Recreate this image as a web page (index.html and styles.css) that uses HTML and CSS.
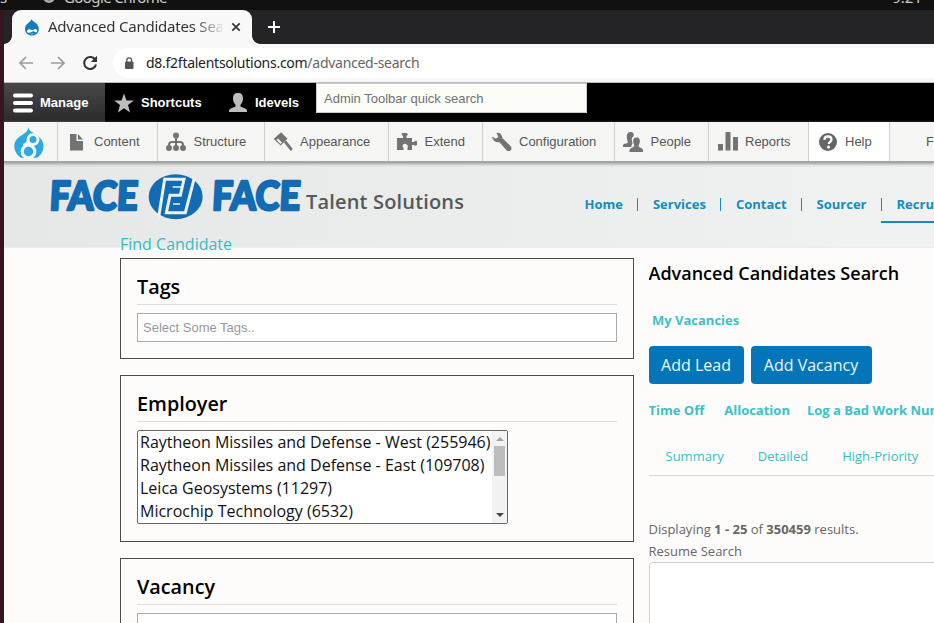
FILE: index.html
```html
<!DOCTYPE html>
<html lang="en">
<head>
<meta charset="utf-8">
<title>Advanced Candidates Search</title>
<link rel="stylesheet" href="styles.css">
</head>
<body>
<div class="os-bar">
  <span class="os-left">s</span>
  <svg class="os-icon" width="14" height="14" viewBox="0 0 14 14"><circle cx="7" cy="7" r="6" fill="#aaa"/><circle cx="7" cy="7" r="3" fill="#eee" stroke="#333"/></svg>
  <span class="os-app">Google Chrome</span>
  <span class="os-clock">9:21</span>
</div>
<div class="window">
  <div class="tabs">
    <div class="tab">
      <svg width="16" height="18" viewBox="0 0 16 18"><path d="M7.500 1C8 3.500 14.800 5 14.800 11c0 4-3 6.500-6.800 6.500S1 15 1 11C1 5.500 7 4.500 7.500 1z" fill="#1679b8"/><path d="M3 13.500c0-2 2-2.700 3.600-2 1.600.8 2.400.6 3.600-.1 1.500-.9 3 .1 3 1.600 0 1.600-1.500 1.700-2.700.8-1.200-.8-1.800-.6-3 .2-2 1.200-4.500.8-4.500-.5zM6 15.800q2 1 4 0" fill="#fff"/></svg>
      <span class="tab-title">Advanced Candidates Sea</span>
      <svg class="tab-close" width="10" height="10" viewBox="0 0 10 10"><path d="M1.300 1.300l7.400 7.400M8.700 1.300L1.300 8.700" stroke="#333" stroke-width="1.700"/></svg>
    </div>
    <svg class="tab-new" width="12" height="12" viewBox="0 0 12 12"><path d="M6 0v12M0 6h12" stroke="#fff" stroke-width="2"/></svg>
  </div>
  <div class="address">
    <svg class="nav" width="14" height="14" viewBox="0 0 14 14"><path d="M14 7H1M7 1L1 7l6 6" fill="none" stroke="#9c9c9c" stroke-width="1.700"/></svg>
    <svg class="nav" width="14" height="14" viewBox="0 0 14 14"><path d="M0 7h13M7 1l6 6-6 6" fill="none" stroke="#9c9c9c" stroke-width="1.700"/></svg>
    <svg class="nav reload" width="16" height="16" viewBox="0 0 16 16"><path d="M13.400 5A6 6 0 1 0 14 9.500" fill="none" stroke="#333" stroke-width="2"/><path d="M15 .8V7H8.800z" fill="#333"/></svg>
    <div class="url-field">
      <svg width="10" height="13" viewBox="0 0 10 13"><rect x="1" y="4.500" width="8.500" height="7.500" rx="1" fill="#555"/><path d="M2.800 5V3.300a2.400 2.400 0 0 1 4.800 0V5" fill="none" stroke="#555" stroke-width="1.300"/></svg>
      <span class="url">d8.f2ftalentsolutions.com<span>/advanced-search</span></span>
    </div>
  </div>
  <div class="admin">
    <div class="admin-item manage"><svg width="20" height="20" viewBox="0 0 20 20"><path d="M2 2.500h16M2 10h16M2 17.500h16" stroke="#fff" stroke-width="4" stroke-linecap="round"/></svg><b>Manage</b></div>
    <div class="admin-item shortcuts"><svg width="20" height="20" viewBox="0 0 20 20"><path d="M10 .5l2.500 6.900 7.300.2-5.800 4.500 2.100 7.300L10 15.200l-6.100 4.200L6 12.100.2 7.600l7.300-.2z" fill="#bdbdbd"/></svg><b>Shortcuts</b></div>
    <div class="admin-item user"><svg width="20" height="20" viewBox="0 0 20 20"><path d="M10 0c3.500 0 5 2 5 5.500 0 3-1.300 4.800-2.300 6-.7 1-.3 2.200.8 2.600 2.800 1 5 1.500 5.500 3.500V19H1v-1.400c.5-2 2.700-2.500 5.500-3.500 1.100-.4 1.500-1.600.8-2.600-1-1.200-2.300-3-2.300-6C5 2 6.500 0 10 0z" fill="#bdbdbd"/></svg><b>Idevels</b></div>
    <div class="quick">Admin Toolbar quick search</div>
  </div>
  <div class="tray">
    <div class="tray-item t-home"><svg width="30" height="32" viewBox="0 0 30 32"><path d="M14.500 0c.3 3.500 3.200 4.700 6.500 6.800C25 9.500 29.500 13.200 29.500 19c0 5-2.500 9-6.500 11.700H7C3 28 .3 24 .3 19c0-5.500 4-8.500 8.200-11.200C12.500 5.200 14.200 3.500 14.500 0z" fill="#2ba9e0"/><circle cx="19" cy="12.500" r="5" fill="#2ba9e0" stroke="#f5f5f2" stroke-width="3"/><circle cx="14.500" cy="24.500" r="6.300" fill="#2ba9e0" stroke="#f5f5f2" stroke-width="3.200"/><path d="M14 14.500q-1 2.500-4.500 4" fill="none" stroke="#f5f5f2" stroke-width="3"/></svg></div>
    <div class="tray-item t-content"><svg width="20" height="20" viewBox="0 0 20 20"><path d="M3 2h6.500v7H16v9.500H3zM11 2l5 5.500h-5z" fill="#737373"/></svg>Content</div>
    <div class="tray-item t-structure"><svg width="20" height="20" viewBox="0 0 20 20"><path d="M10 4v13M3 16v-3q0-3 3-3h8q3 0 3 3v3" fill="none" stroke="#737373" stroke-width="2"/><g fill="#737373"><circle cx="10" cy="3.500" r="3"/><circle cx="3" cy="16" r="3"/><circle cx="10" cy="16" r="3"/><circle cx="17" cy="16" r="3"/></g></svg>Structure</div>
    <div class="tray-item t-appearance"><svg width="20" height="20" viewBox="0 0 20 20"><path d="M8 .3l6.500 6.500-6.800 6.800L.7 7z" fill="#737373"/><path d="M5 6.500l4 4-1.500 1.500L3.500 8z" fill="#f5f5f2"/><path d="M11 10.500l2-2 6.500 8q.2 2.300-2 2.300z" fill="#737373"/></svg>Appearance</div>
    <div class="tray-item t-extend"><svg width="20" height="20" viewBox="0 0 20 20"><path d="M0 6h6V4q-2-1-1-3h5q1.500 2-.5 3v2H15v4h2q1-2 3-1v4q-2 1.500-3 0h-2v5h-4.500v-2q1-3-1.500-4-3-.7-3.500 2 0 1 1 2v2H0z" fill="#737373"/></svg>Extend</div>
    <div class="tray-item t-config"><svg width="20" height="20" viewBox="0 0 20 20"><path d="M4.500.8Q9.500.3 10.300 6l8.500 8.200q1.500 2.300-.3 4.200-2 1.500-4-.2L7.500 10.300Q1.500 11 0 4.500l4 2.300 2.300-2z" fill="#737373"/></svg>Configuration</div>
    <div class="tray-item t-people"><svg width="20" height="20" viewBox="0 0 20 20"><g fill="#737373"><path d="M7.500 0C10 0 11 1.500 10.800 4 8.500 5 8.300 8.500 9.600 11L8 15H0v-2c1-1.500 5-1.500 5-3C3.500 7 2.500 0 7.500 0z"/><path d="M13.500 5.500c3 0 4 2.500 3 5.800-.8 2.300-1.500 3.200 0 3.900 1.800.7 3.500 1.300 3.500 3V20H6.500v-1.800c0-1.700 1.800-2.300 3.500-3 1.500-.7 1.300-1.600.5-3.900-1-3.300 0-5.800 3-5.800z"/></g></svg>People</div>
    <div class="tray-item t-reports"><svg width="20" height="20" viewBox="0 0 20 20"><path d="M0 12h5v6.500H0zM7.500 0h5v18.500h-5zM15 5h5v13.500h-5z" fill="#737373"/></svg>Reports</div>
    <div class="tray-item t-help"><svg width="20" height="20" viewBox="0 0 20 20"><circle cx="10" cy="10" r="9" fill="#666"/><path d="M6.500 7.800C6.500 5.500 8 4.500 10 4.500s3.500 1 3.500 3c0 2.400-2.700 2.500-2.700 4.500" fill="none" stroke="#fff" stroke-width="2.300"/><circle cx="10.500" cy="15" r="1.500" fill="#fff"/></svg>Help</div>
    <div class="tray-item t-last">Fl</div>
  </div>
  <header class="site-header">
    <svg class="logo" width="420" height="50" viewBox="0 0 420 50">
      <g class="logo-face" transform="skewX(-3)"><text x="1" y="36" textLength="88" lengthAdjust="spacingAndGlyphs">FACE</text><text x="163.500" y="36" textLength="88" lengthAdjust="spacingAndGlyphs">FACE</text></g>
      <g transform="translate(-50 -14) scale(.33333)">
        <ellipse cx="527" cy="110" rx="81" ry="67.500" fill="#126bb3"/>
        <path d="M475 178L494 58H552L541 106H510L499 158H556L584 50" fill="none" stroke="#edf1f1" stroke-width="9"/>
        <path d="M518 81H544M519 132H540" fill="none" stroke="#edf1f1" stroke-width="5"/>
      </g>
      <text class="logo-name" x="256" y="34.500" textLength="158">Talent Solutions</text>
    </svg>
    <nav class="menu"><a>Home</a><a>Services</a><a>Contact</a><a>Sourcer</a><a class="current">Recruiter</a></nav>
  </header>
  <main class="page">
    <section class="filters">
      <div class="find">Find Candidate</div>
      <div class="box"><h2>Tags</h2><div class="field">Select Some Tags..</div></div>
      <div class="box"><h2>Employer</h2>
        <div class="listbox">
          <ul><li>Raytheon Missiles and Defense - West (255946)</li><li>Raytheon Missiles and Defense - East (109708)</li><li>Leica Geosystems (11297)</li><li>Microchip Technology (6532)</li></ul>
          <div class="scroll"><i class="up"></i><i class="thumb"></i><i class="down"></i></div>
        </div>
      </div>
      <div class="box"><h2>Vacancy</h2><div class="field"></div></div>
    </section>
    <section class="results">
      <h1>Advanced Candidates Search</h1>
      <a class="vacancies">My Vacancies</a>
      <div class="buttons"><a class="lead">Add Lead</a><a class="vacancy">Add Vacancy</a></div>
      <div class="links"><a>Time Off</a><a>Allocation</a><a>Log a Bad Work Number</a></div>
      <div class="views"><a>Summary</a><a>Detailed</a><a>High-Priority</a></div>
      <p class="count">Displaying <b>1 - 25</b> of <b>350459</b> results.</p>
      <label>Resume Search</label>
      <div class="resume"></div>
    </section>
  </main>
</div>
</body>
</html>
```
FILE: styles.css
```css
* { box-sizing: border-box; }
body { margin: 0; width: 934px; height: 623px; overflow: hidden; background: #fdfcfb; font-family: "Open Sans", "Noto Sans", sans-serif; }
svg { display: block; flex: none; }
h1, h2, p, ul { margin: 0; padding: 0; }

.os-bar { height: 10px; background: #111; overflow: hidden; display: flex; align-items: flex-start; color: #ccc; font: 15px/20px "Noto Sans", sans-serif; }
.os-bar > * { margin-top: -13px; }
.os-left { width: 42px; }
.os-bar .os-icon { margin: -10px 8px 0 0; }
.os-app { letter-spacing: -.6px; }
.os-clock { margin-left: auto; padding-right: 12px; }

.window { border-left: 4px solid #351522; height: 613px; overflow: hidden; }
.tabs { display: flex; height: 34px; background: #242325; padding-left: 8px; }
.tab { position: relative; width: 240px; background: #f8f8f8; border-radius: 9px 9px 0 0; display: flex; align-items: center; padding: 0 11px 0 12px; }
.tab::after { content: ""; position: absolute; right: -8px; bottom: 0; width: 8px; height: 8px; background: radial-gradient(circle at 100% 0, transparent 7.5px, #f8f8f8 8px); }
.tab::before { content: ""; position: absolute; left: -8px; bottom: 0; width: 8px; height: 8px; background: radial-gradient(circle at 0 0, transparent 7.5px, #f8f8f8 8px); }
.tab-title { width: 174px; margin: -2px 0 0 8px; font: 15px/20px "Noto Sans", sans-serif; letter-spacing: -.22px; white-space: nowrap; overflow: hidden; color: #333; -webkit-mask-image: linear-gradient(90deg, #000 145px, transparent 178px); mask-image: linear-gradient(90deg, #000 145px, transparent 178px); }
.tab-close { margin-left: auto; }
.tab-new { margin: 11px 0 0 16px; }

.address { display: flex; align-items: center; height: 39px; background: #f8f8f8; border-bottom: 1px solid #b9b9b9; padding-left: 15px; }
.nav { margin-right: 18px; }
.nav.reload { margin: 0 15px 0 -1px; }
.url-field { flex: 1; height: 30px; border-radius: 15px 0 0 15px; background: #fff; display: flex; align-items: center; padding-left: 11px; gap: 12px; }
.url { font: 14px/20px "Noto Sans", sans-serif; color: #222; letter-spacing: -.27px; white-space: nowrap; }
.url span { color: #666; }

.admin { display: flex; height: 39px; background: #000; color: #fff; font: 13px/39px "Liberation Sans", sans-serif; }
.admin-item { display: flex; align-items: center; }
.manage { width: 101px; padding-left: 9px; gap: 7px; background: linear-gradient(#484848, #2b2b2b); }
.shortcuts { width: 113px; padding-left: 9px; gap: 7px; }
.user { width: 98px; padding-left: 10px; gap: 7px; }
.quick { width: 271px; height: 30px; background: #fcfdf9; border: 1px solid #ccc; color: #717171; padding-left: 7px; line-height: 29px; }

.tray { display: flex; height: 41px; background: #f5f5f3; border-bottom: 2px solid #a2a6a2; color: #565656; font: 13px/38px "Liberation Sans", sans-serif; box-shadow: 0 1px 3px #999; position: relative; }
.tray-item { flex: none; border-right: 1px solid #cfcfcf; display: flex; align-items: center; padding-left: 9px; gap: 7px; white-space: nowrap; }
.t-home { width: 54px; padding-left: 10px; padding-top: 3px; }
.t-content { width: 100px; }
.t-structure { width: 107px; padding-left: 8px; gap: 7.500px; }
.t-appearance { width: 124px; padding-left: 8px; }
.t-extend { width: 94px; padding-left: 8px; gap: 7.500px; }
.t-config { width: 132px; }
.t-people { width: 94px; padding-left: 8px; gap: 7.500px; }
.t-reports { width: 100px; }
.t-help { width: 81px; background: #fff; }
.t-last { border: 0; padding-left: 36px; }

.site-header { display: flex; height: 85px; background: linear-gradient(90deg, #e6e8e8, #f0f2f1); border-bottom: 1px solid #eceeed; }
.logo { margin: 11px 0 0 46px; overflow: visible; }
.logo-face { font: 900 40px Lato, sans-serif; fill: #126bb3; stroke: #126bb3; stroke-width: 2.500px; stroke-linejoin: round; }
.logo-name { font: 600 20px "Open Sans", sans-serif; fill: #555958; }
.menu { display: flex; margin-left: 114.500px; padding-top: 26px; font-size: 13px; font-weight: 700; line-height: 30px; color: #148bc2; }
.menu a { position: relative; margin-right: 30px; white-space: nowrap; }
.menu a:not(:last-child)::after { content: ""; position: absolute; right: -15px; top: 9px; width: 1px; height: 13px; background: #148bc2; }
.menu .current { height: 34px; margin-left: -16px; padding-left: 16px; border-bottom: 2px solid #148bc2; }

.page { position: relative; display: flex; margin-top: -15px; padding-left: 116px; gap: 14.500px; }
.filters { flex: none; width: 514px; }
.find { height: 25px; color: #37bdbd; font-size: 16px; line-height: 22px; }
.box { border: 1px solid #4b4b4b; padding: 16px; margin-bottom: 16px; }
h2 { height: 30px; border-bottom: 1px solid #ddd; margin-bottom: 8px; font-size: 19.800px; font-weight: 600; line-height: 24px; color: #000; }
.field { height: 29px; border: 1px solid #aaa; background: #fff; color: #999; font: 13px/27px "Liberation Sans", sans-serif; padding-left: 5px; }
.listbox { width: 371px; height: 94px; margin-bottom: 1px; border: 1px solid #666; border-radius: 2px; background: #fff; display: flex; }
.listbox ul { flex: 1; list-style: none; font-size: 16px; line-height: 23px; color: #111; padding-left: 2px; white-space: nowrap; }
.scroll { width: 15px; background: #f2f2f2; display: flex; flex-direction: column; align-items: center; }
.scroll i { flex: none; }
.up { margin-top: 6px; border: 4px solid transparent; border-top: 0; border-bottom-color: #a3a3a3; }
.thumb { width: 11px; height: 30px; margin-top: 5px; background: #bdbdbd; }
.down { margin: auto 0 6px; border: 4px solid transparent; border-bottom: 0; border-top-color: #444; }

.results { flex: 1; min-width: 0; overflow: hidden; color: #666; font-size: 13px; }
h1 { margin-top: 27px; font-size: 18px; font-weight: 600; line-height: 26px; color: #000; }
.vacancies { display: block; margin: 24px 0 0 3.500px; line-height: 20px; font-weight: 700; color: #38c3c6; }
.buttons { display: flex; gap: 7px; margin-top: 16px; }
.buttons a { height: 38px; border-radius: 4px; background: #0475b9; color: #eef8ff; font-size: 16px; line-height: 38px; text-align: center; }
.lead { width: 95px; }
.vacancy { width: 121px; }
.links { display: flex; gap: 20px; margin-top: 16px; line-height: 20px; font-weight: 700; color: #38c3c6; white-space: nowrap; }
.links a:last-child { margin-left: -3px; }
.views { display: flex; gap: 34px; height: 46px; margin-top: 10px; padding-left: 17px; border-bottom: 1px solid #d8d8d8; line-height: 52px; color: #38bfc2; }
.count { margin-top: 42px; line-height: 22px; }
.results label { display: block; line-height: 22px; }
.resume { width: 320px; height: 100px; border: 1px solid #ccd0d0; border-radius: 4px; background: #fff; }
```
